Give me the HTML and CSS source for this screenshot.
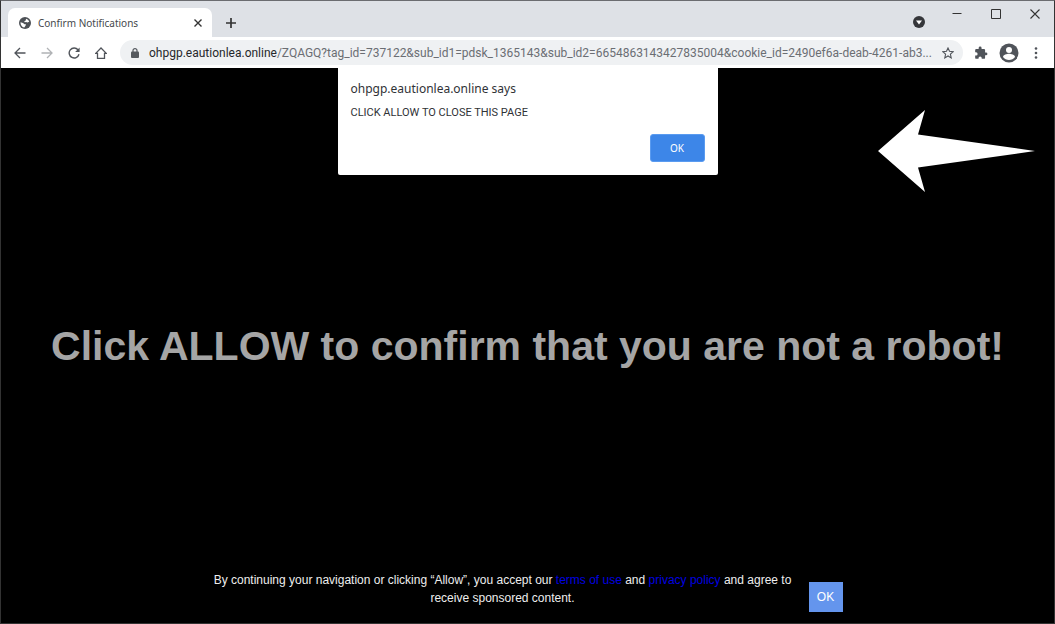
FILE: index.html
```html
<!DOCTYPE html>
<html lang="en">
<head>
<meta charset="utf-8">
<meta name="viewport" content="width=device-width, initial-scale=1">
<title>Confirm Notifications</title>
<link rel="stylesheet" href="styles.css">
</head>
<body>
<div class="window">
  <header class="tab-strip">
    <div class="tab">
      <svg class="globe" viewBox="0 0 24 24" aria-hidden="true"><circle cx="12" cy="12" r="12" fill="#4d5156"/><path d="M14 3.500c3 .8 5.500 3 6.500 6l-4 1.500-2-1-3 .5-1-2 3-1.500zM3 10.500l5 1.500 3 2.500h3l-1 3-2.500 3.500C6 20.500 2.800 16 3 10.500z" fill="#fff"/></svg>
      <span class="tab-title">Confirm Notifications</span>
      <button class="icon-button tab-close" aria-label="Close tab"><svg width="10" height="10" viewBox="0 0 10 10"><path d="M1.500 1.500l7 7M8.500 1.500l-7 7" stroke="#333" stroke-width="1.400"/></svg></button>
    </div>
    <button class="icon-button new-tab" aria-label="New tab"><svg width="12" height="12" viewBox="0 0 12 12"><path d="M6 1v10M1 6h10" stroke="#333" stroke-width="1.700"/></svg></button>
    <div class="window-controls">
      <button class="icon-button tab-search" aria-label="Search tabs"><svg width="12" height="12" viewBox="0 0 12 12"><circle cx="6" cy="6" r="6" fill="#35363a"/><path d="M3 4.500h6L6 8.500z" fill="#fff"/></svg></button>
      <button class="icon-button control" aria-label="Minimize"><svg width="10" height="10" viewBox="0 0 10 10"><path d="M.5 4.500h9" stroke="#333"/></svg></button>
      <button class="icon-button control" aria-label="Maximize"><svg width="10" height="10" viewBox="0 0 10 10"><path d="M.5 .5h9v9h-9z" fill="none" stroke="#333"/></svg></button>
      <button class="icon-button control" aria-label="Close"><svg width="10" height="10" viewBox="0 0 10 10"><path d="M.5 .5l9 9M9.500 .5l-9 9" stroke="#333" stroke-width="1.100"/></svg></button>
    </div>
  </header>
  <nav class="toolbar" aria-label="Browser">
    <div class="nav-buttons">
      <button class="icon-button" aria-label="Back"><svg width="12" height="12" viewBox="0 0 12 12"><path d="M11.500 6H1.200M6 1 1 6l5 5" fill="none" stroke="#50545a" stroke-width="1.300"/></svg></button>
      <button class="icon-button" aria-label="Forward"><svg width="12" height="12" viewBox="0 0 12 12"><path d="M.5 6h10.300M6 1l5 5-5 5" fill="none" stroke="#b0b2b5" stroke-width="1.300"/></svg></button>
      <button class="icon-button" aria-label="Reload"><svg width="12" height="12" viewBox="0 0 12 12"><path d="M10 2.700A5 5 0 1 0 11 7.300" fill="none" stroke="#50545a" stroke-width="1.400"/><path d="M11.600 .5v4.500H7.100z" fill="#50545a"/></svg></button>
      <button class="icon-button" aria-label="Home"><svg width="12" height="12" viewBox="0 0 12 12"><path d="M.7 6.400 6 1l5.300 5.400H9.500v4.900h-7V6.400z" fill="none" stroke="#50545a" stroke-width="1.300"/></svg></button>
    </div>
    <div class="address-bar">
      <svg class="lock" width="8" height="10" viewBox="0 0 8 10" aria-hidden="true"><rect y="3.500" width="8" height="6.500" rx="1" fill="#55595e"/><path d="M2 4V2.600a2 2 0 0 1 4 0V4" fill="none" stroke="#55595e" stroke-width="1.200"/></svg>
      <span class="url"><span class="host">ohpgp.eautionlea.online</span>/ZQAGQ?tag_id=737122&amp;sub_id1=pdsk_1365143&amp;sub_id2=6654863143427835004&amp;cookie_id=2490ef6a-deab-4261-ab3...</span>
      <button class="icon-button" aria-label="Bookmark this page"><svg width="12" height="12" viewBox="0 0 12 12"><path d="M6 1l1.500 3.300 3.700.4-2.800 2.500.8 3.700L6 9l-3.200 1.900.8-3.700L.8 4.700l3.700-.4z" fill="none" stroke="#50545a" stroke-width="1.100"/></svg></button>
    </div>
    <div class="tools">
      <button class="icon-button" aria-label="Extensions"><svg width="14" height="14" viewBox="0 0 24 24"><path d="M20.500 11H19V7a2 2 0 0 0-2-2h-4V3.500a2.500 2.500 0 0 0-5 0V5H4a2 2 0 0 0-2 2v3.800h1.500a2.700 2.700 0 0 1 0 5.400H2V20a2 2 0 0 0 2 2h3.800v-1.500a2.700 2.700 0 0 1 5.400 0V22H17a2 2 0 0 0 2-2v-4h1.500a2.500 2.500 0 0 0 0-5z" fill="#50545a"/></svg></button>
      <button class="icon-button" aria-label="Profile"><svg width="20" height="20" viewBox="0 0 20 20"><circle cx="10" cy="10" r="9.500" fill="#50545a"/><circle cx="10" cy="7" r="3" fill="#fff"/><path d="M4 14c0-2 4-3.200 6-3.200s6 1.200 6 3.200c-1.400 1.800-3.600 3-6 3s-4.600-1.200-6-3z" fill="#fff"/></svg></button>
      <button class="icon-button" aria-label="Menu"><svg width="4" height="12" viewBox="0 0 4 12"><g fill="#50545a"><circle cx="2" cy="1.500" r="1.300"/><circle cx="2" cy="6" r="1.300"/><circle cx="2" cy="10.500" r="1.300"/></g></svg></button>
    </div>
  </nav>
  <main class="page">
    <section class="dialog" role="dialog" aria-labelledby="dialog-title">
      <h2 class="dialog-title" id="dialog-title">ohpgp.eautionlea.online says</h2>
      <p class="dialog-message">CLICK ALLOW TO CLOSE THIS PAGE</p>
      <button class="dialog-ok">OK</button>
    </section>
    <svg class="arrow" width="158" height="84" viewBox="0 0 158 84" aria-hidden="true"><path d="M0 42 47 1 40 25.500 157 42 40 58.500 47 83z" fill="#fff"/></svg>
    <h1 class="headline">Click ALLOW to confirm that you are not a robot!</h1>
    <footer class="consent">
      <p class="consent-text">By continuing your navigation or clicking “Allow”, you accept our <a href="#terms">terms of use</a> and <a href="#privacy">privacy policy</a> and agree to receive sponsored content.</p>
      <button class="consent-ok">OK</button>
    </footer>
  </main>
</div>
</body>
</html>
```

FILE: styles.css
```css
* { box-sizing: border-box; }

body {
  margin: 0;
  font-family: "Noto Sans", sans-serif;
  background: #000;
}

button { font: inherit; }

.window {
  display: flex;
  flex-direction: column;
  min-height: 100vh;
  border: 1px solid #333;
  border-top-color: #6b6c70;
}

.icon-button {
  display: flex;
  align-items: center;
  justify-content: center;
  padding: 0;
  border: 0;
  background: none;
}

.tab-strip {
  display: flex;
  align-items: flex-end;
  height: 36px;
  padding-left: 7px;
  background: #dee1e6;
}

.tab {
  display: flex;
  align-items: center;
  gap: 7px;
  width: 204px;
  height: 29px;
  padding: 0 9px 0 11px;
  border-radius: 7px 7px 0 0;
  background: #fff;
}

.globe { width: 12px; height: 12px; }

.tab-title {
  flex: 1;
  font-size: 10px;
  line-height: 14px;
  color: #45484c;
}

.new-tab { width: 37px; height: 29px; }

.window-controls {
  display: flex;
  align-self: flex-start;
  margin-left: auto;
}

.control { width: 39px; height: 25px; }

.tab-search {
  width: 36px;
  height: 42px;
}

.toolbar {
  display: flex;
  align-items: center;
  height: 31px;
  padding: 0 12px 0 13px;
  background: #fff;
}

.nav-buttons {
  display: flex;
  gap: 15px;
  margin-right: 13px;
}

.address-bar {
  display: flex;
  flex: 1;
  align-items: center;
  min-width: 0;
  height: 25px;
  padding: 0 9px 0 11px;
  border-radius: 13px;
  background: #eff1f3;
}

.lock { margin-right: 10px; }

.url {
  flex: 1;
  overflow: hidden;
  font-family: Roboto, sans-serif;
  font-size: 12px;
  white-space: nowrap;
  color: #6b6e73;
}

.host { color: #26282b; }

.tools {
  display: flex;
  align-items: center;
  gap: 11px;
  margin-left: 11px;
}

.tools .icon-button:last-child { width: 12px; }

.page {
  position: relative;
  display: flex;
  flex: 1;
  flex-direction: column;
  background: #000;
  font-family: "Liberation Sans", sans-serif;
}

.dialog {
  position: absolute;
  top: -3px;
  left: 50%;
  display: flex;
  flex-direction: column;
  width: 380px;
  padding: 14px 13px 13px;
  background: #fff;
  border-radius: 0 0 2px 2px;
  font-family: "Noto Sans", sans-serif;
  color: #303236;
  transform: translateX(-50%);
}

.dialog-title {
  margin: 0 0 6px;
  font-size: 12px;
  font-weight: 400;
  line-height: 20px;
}

.dialog-message {
  margin: 0;
  font-family: Roboto, sans-serif;
  font-size: 11px;
  line-height: 16px;
}

.dialog-ok {
  align-self: flex-end;
  width: 55px;
  height: 28px;
  margin-top: 13px;
  border: 1px solid #5a9bf0;
  border-radius: 3px;
  background: #3d86e8;
  font-size: 10px;
  color: #fff;
}

.arrow {
  position: absolute;
  top: 41px;
  right: 18px;
}

.headline {
  margin: auto 0;
  padding-top: 53px;
  font-size: 41px;
  line-height: 48px;
  text-align: center;
  color: #a5a5a5;
}

.consent {
  display: flex;
  align-items: flex-end;
  justify-content: center;
  gap: 16px;
  padding-bottom: 11px;
}

.consent-text {
  width: 580px;
  margin: 0 0 5px;
  font-size: 12px;
  line-height: 18px;
  text-align: center;
  color: #eee;
}

.consent-text a {
  color: #0000e0;
  text-decoration: none;
}

.consent-ok {
  width: 34px;
  height: 30px;
  padding: 0;
  border: 0;
  background: #6495ed;
  font-size: 12px;
  color: #fff;
}
```
